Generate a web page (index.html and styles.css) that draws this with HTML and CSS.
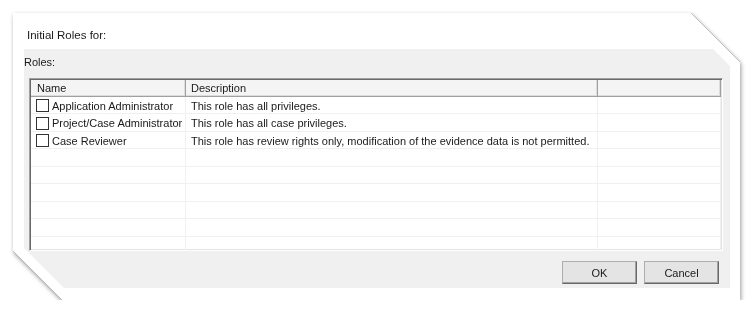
FILE: index.html
```html
<!DOCTYPE html>
<html>
  <head>
    <title>Initial Roles</title>
    <meta charset="utf-8" />
    <link rel="stylesheet" href="styles.css">
  </head>
  <body>
    <div class="shadow">
      <div class="frame">
        <div class="dialog">
          <div class="dialog-head">Initial Roles for:</div>
          <div class="dialog-body">
            <div class="label">Roles:</div>
            <div class="list">
              <div class="list-head">
                <div class="hcell">Name</div>
                <div class="hcell">Description</div>
                <div class="hcell"></div>
              </div>
              <div class="rows">
                <div class="cell name"><span class="check"></span>Application Administrator</div>
                <div class="cell">This role has all privileges.</div>
                <div class="cell"></div>
                <div class="cell name"><span class="check"></span>Project/Case Administrator</div>
                <div class="cell">This role has all case privileges.</div>
                <div class="cell"></div>
                <div class="cell name"><span class="check"></span>Case Reviewer</div>
                <div class="cell">This role has review rights only, modification of the evidence data is not permitted.</div>
                <div class="cell"></div>
                <div class="cell"></div><div class="cell"></div><div class="cell"></div>
                <div class="cell"></div><div class="cell"></div><div class="cell"></div>
                <div class="cell"></div><div class="cell"></div><div class="cell"></div>
                <div class="cell"></div><div class="cell"></div><div class="cell"></div>
                <div class="cell"></div><div class="cell"></div><div class="cell"></div>
                <div class="cell"></div><div class="cell"></div><div class="cell"></div>
              </div>
            </div>
            <div class="buttons">
              <button class="btn">OK</button>
              <button class="btn">Cancel</button>
            </div>
          </div>
        </div>
      </div>
    </div>
  </body>
</html>
```
FILE: styles.css
```css
html,
body {
  margin: 0;
  padding: 0;
  background: #fff;
  font: 11px "Liberation Sans", Arial, sans-serif;
  color: #1a1a1a;
}
body {
  padding: 13px 0 0 13px;
}
.shadow {
  width: 727px;
  height: 287px;
  filter: drop-shadow(0 0 0.7px rgba(0, 0, 0, 0.8)) drop-shadow(1px 2px 2px rgba(0, 0, 0, 0.4));
}
.frame {
  box-sizing: border-box;
  height: 100%;
  padding: 11px 10px 12px 11px;
  background: #fff;
  clip-path: polygon(0 0, calc(100% - 49px) 0, 100% 49px, 100% 100%, 49px 100%, 0 calc(100% - 49px));
}
.dialog {
  display: flex;
  flex-direction: column;
  height: 100%;
  clip-path: polygon(0 0, calc(100% - 42px) 0, 100% 42px, 100% 100%, 40px 100%, 0 calc(100% - 40px));
}
.dialog-head {
  box-sizing: border-box;
  height: 25px;
  padding: 3px 3px 0;
  line-height: 16px;
  font-size: 11.5px;
  background: #fff;
}
.dialog-body {
  flex: 1;
  display: flex;
  flex-direction: column;
  padding: 5px 7px 4px 0;
  background: #f0f0f0;
}
.label {
  line-height: 16px;
}
.list {
  box-sizing: border-box;
  height: 173px;
  margin: 8px 0 0 5px;
  overflow: hidden;
  background: #fff;
  border: 1px solid;
  border-color: #a0a0a0 #fff #fff #a0a0a0;
  box-shadow: inset 1px 1px 0 #696969, inset -1px -1px 0 #e3e3e3;
  padding: 1px;
}
.list-head,
.rows {
  display: grid;
  grid-template-columns: 155px 412px 1fr;
}
.hcell {
  box-sizing: border-box;
  height: 17px;
  padding: 1px 5px 0;
  line-height: 15px;
  background: #f4f4f4;
  border-right: 1px solid #a0a0a0;
  border-bottom: 1px solid #a0a0a0;
  box-shadow: inset -1px -1px 0 #dcdcdc;
}
.hcell:first-child {
  padding-left: 6px;
}
.rows {
  grid-auto-rows: 17.45px;
}
.cell {
  box-sizing: border-box;
  display: flex;
  align-items: center;
  padding: 1px 5px 0;
  white-space: nowrap;
  border-right: 1px solid #f0f0f0;
  border-bottom: 1px solid #f0f0f0;
}
.cell.name {
  gap: 3px;
  padding-right: 0;
}
.check {
  box-sizing: border-box;
  flex: none;
  width: 13px;
  height: 13px;
  border: 1px solid #333;
  background: #fff;
}
.buttons {
  display: flex;
  justify-content: flex-end;
  gap: 7px;
  margin-top: 10px;
  padding-right: 4px;
}
.btn {
  box-sizing: border-box;
  width: 75px;
  height: 23px;
  padding: 0;
  font: 11px "Liberation Sans", Arial, sans-serif;
  color: #1a1a1a;
  background: #e4e4e4;
  border: 1px solid;
  border-color: #adadad #696969 #696969 #adadad;
  box-shadow: inset -1px -1px 0 #a0a0a0;
}
```
